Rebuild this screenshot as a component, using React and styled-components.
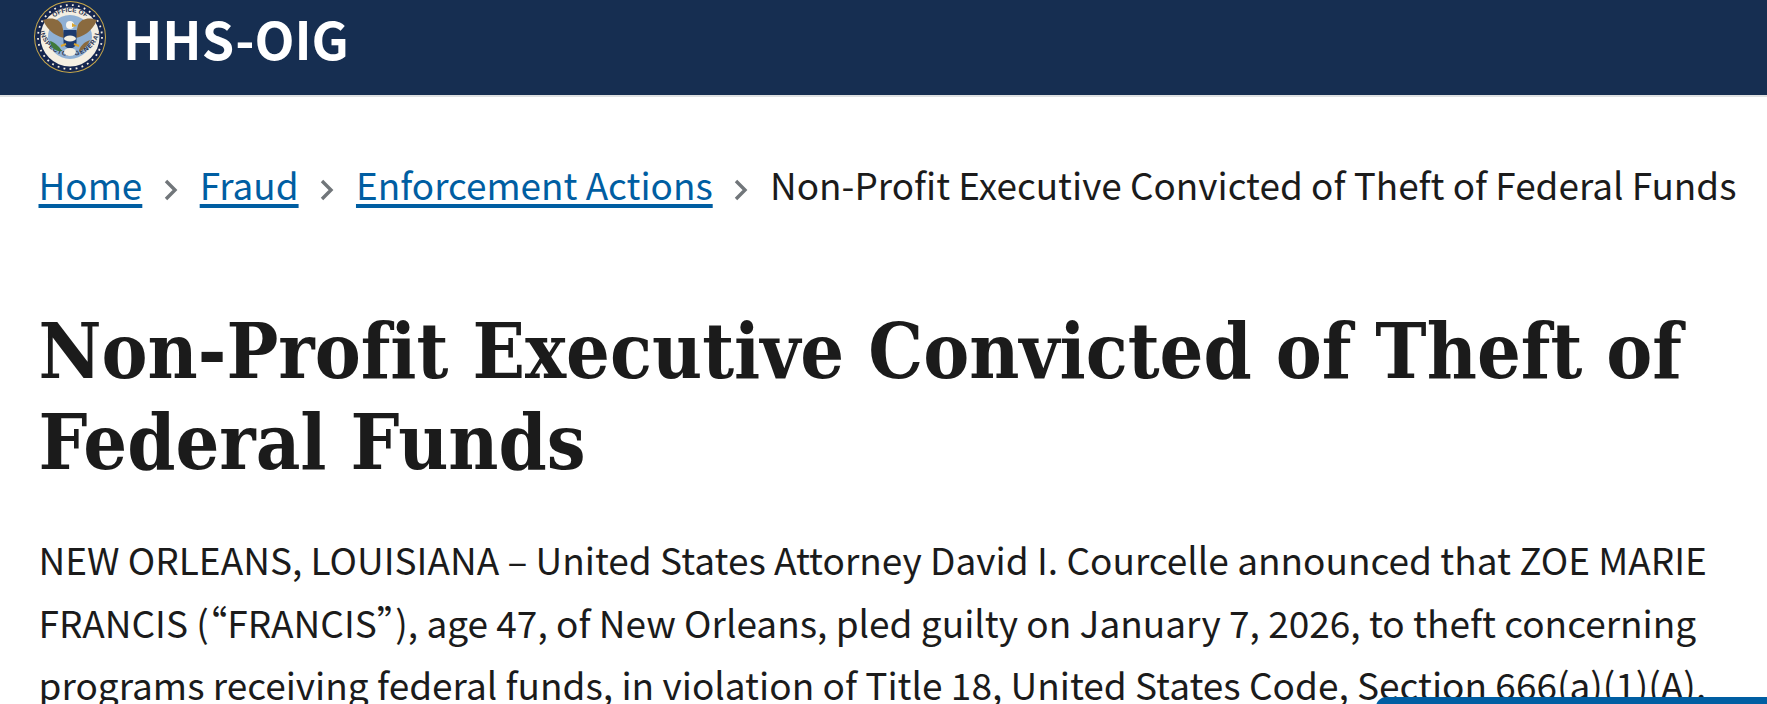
import React from "react";
import styled, { createGlobalStyle } from "styled-components";

const GlobalStyle = createGlobalStyle`
  html, body {
    margin: 0;
    height: 100%;
    overflow: hidden;
    background: #fff;
  }
`;

const Page = styled.div`
  position: relative;
  height: 704px;
  overflow: hidden;
  font-family: "Noto Sans CJK SC", "Open Sans", sans-serif;
  color: #1b1b1b;
`;

const Header = styled.header`
  height: 95px;
  background: #162e51;
  border-bottom: 2px solid #dfe1e2;
  display: flex;
  align-items: flex-start;
  gap: 16px;
  padding-left: 33px;
`;

const Brand = styled.div`
  font-size: 52px;
  font-weight: 700;
  line-height: 76px;
  color: #fff;
`;

const Main = styled.main`
  padding: 0 38.5px;
`;

const Crumbs = styled.nav`
  display: flex;
  align-items: center;
  margin-top: 56px;
  font-size: 36.9px;
  line-height: 62px;
  white-space: nowrap;
`;

const Crumb = styled.a`
  color: #005ea2;
  text-decoration: underline;
  text-decoration-thickness: 4px;
  text-underline-offset: 4px;
`;

const Sep = styled.svg`
  flex-shrink: 0;
  width: 20px;
  height: 24px;
  margin: 11px 18.7px 0;
  color: #71767a;
`;

const Title = styled.h1`
  margin: 91px 0 0;
  font-family: "DejaVu Serif Condensed", "DejaVu Serif", serif;
  font-size: 76.7px;
  font-weight: 700;
  line-height: 91px;
  font-variant-ligatures: none;
  width: 1720px;
`;

const Body = styled.p`
  margin: 40px 0 0;
  font-size: 37px;
  line-height: 62.5px;
  white-space: pre;
`;

const FloatTab = styled.div`
  position: absolute;
  left: 1376px;
  top: 697px;
  width: 420px;
  height: 30px;
  background: #005ea2;
  border-radius: 10px 0 0 0;
`;

const SealText = styled.text`
  font-family: "Liberation Sans", sans-serif;
  font-size: 6.4px;
  font-weight: 700;
  fill: #2a3350;
`;

const Seal = () => (
  <svg width="74" height="74" viewBox="0 0 74 74">
    <defs>
      <path id="sealTop" d="M12 37 A25 25 0 0 1 62 37" />
      <path id="sealBottom" d="M7 31 A30.5 30.5 0 0 0 67 31" />
    </defs>
    <circle cx="37" cy="37" r="36" fill="#c9a94a" />
    <circle cx="37" cy="37" r="35" fill="#14264f" />
    <circle cx="37" cy="37" r="32" fill="none" stroke="#f4efe2" strokeWidth="1.8" strokeDasharray="1.8 4.3" />
    <circle cx="37" cy="37" r="29.5" fill="#f4efe2" />
    <circle cx="37" cy="37" r="22" fill="#8fb0d4" />
    <SealText textAnchor="middle">
      <textPath href="#sealTop" startOffset="50%">OFFICE OF</textPath>
    </SealText>
    <SealText textAnchor="middle" letterSpacing="0.8">
      <textPath href="#sealBottom" startOffset="50%">INSPECTOR GENERAL</textPath>
    </SealText>
    <path d="M10 20 C17 17 26 18 29 25 L32 38 C25 37 15 32 10 20Z" fill="#8a6a3f" />
    <path d="M64 20 C57 17 48 18 45 25 L42 38 C49 37 59 32 64 20Z" fill="#8a6a3f" />
    <ellipse cx="37" cy="25" rx="4" ry="4" fill="#f8f6ee" />
    <path d="M39 23 L44 26 L39 27Z" fill="#d9a531" />
    <path d="M30.5 30 H43.5 V42 C43.5 46 40 48 37 49 C34 48 30.5 46 30.5 42Z" fill="#1c3a6e" />
    <ellipse cx="37" cy="38.5" rx="6" ry="3" fill="#f4efe2" />
    <path d="M17 41 C21 42 26 46 29 51 C23 52 18 48 17 41Z" fill="#3f7a3a" />
    <path d="M57 40 C55 45 50 50 46 52 C46 47 51 42 57 40Z" fill="#8a6a3f" />
    <path d="M28 46 L33 44 M46 46 L41 44" stroke="#d9a531" strokeWidth="2" />
    <ellipse cx="37" cy="52" rx="6" ry="4" fill="#f4efe2" />
  </svg>
);

const Chevron = () => (
  <Sep viewBox="0 0 20 24">
    <path d="M5 3 L14 12 L5 21" fill="none" stroke="currentColor" strokeWidth="3.4" />
  </Sep>
);

export default function App() {
  return (
    <Page>
      <GlobalStyle />
      <Header>
        <Seal />
        <Brand>HHS-OIG</Brand>
      </Header>
      <Main>
        <Crumbs>
          <Crumb>Home</Crumb>
          <Chevron />
          <Crumb>Fraud</Crumb>
          <Chevron />
          <Crumb>Enforcement Actions</Crumb>
          <Chevron />
          <span>Non-Profit Executive Convicted of Theft of Federal Funds</span>
        </Crumbs>
        <Title>Non-Profit Executive Convicted of Theft of Federal Funds</Title>
        <Body>
          {"NEW ORLEANS, LOUISIANA – United States Attorney David I. Courcelle announced that ZOE MARIE\nFRANCIS (“FRANCIS”), age 47, of New Orleans, pled guilty on January 7, 2026, to theft concerning\nprograms receiving federal funds, in violation of Title 18, United States Code, Section 666(a)(1)(A)."}
        </Body>
      </Main>
      <FloatTab />
    </Page>
  );
}
